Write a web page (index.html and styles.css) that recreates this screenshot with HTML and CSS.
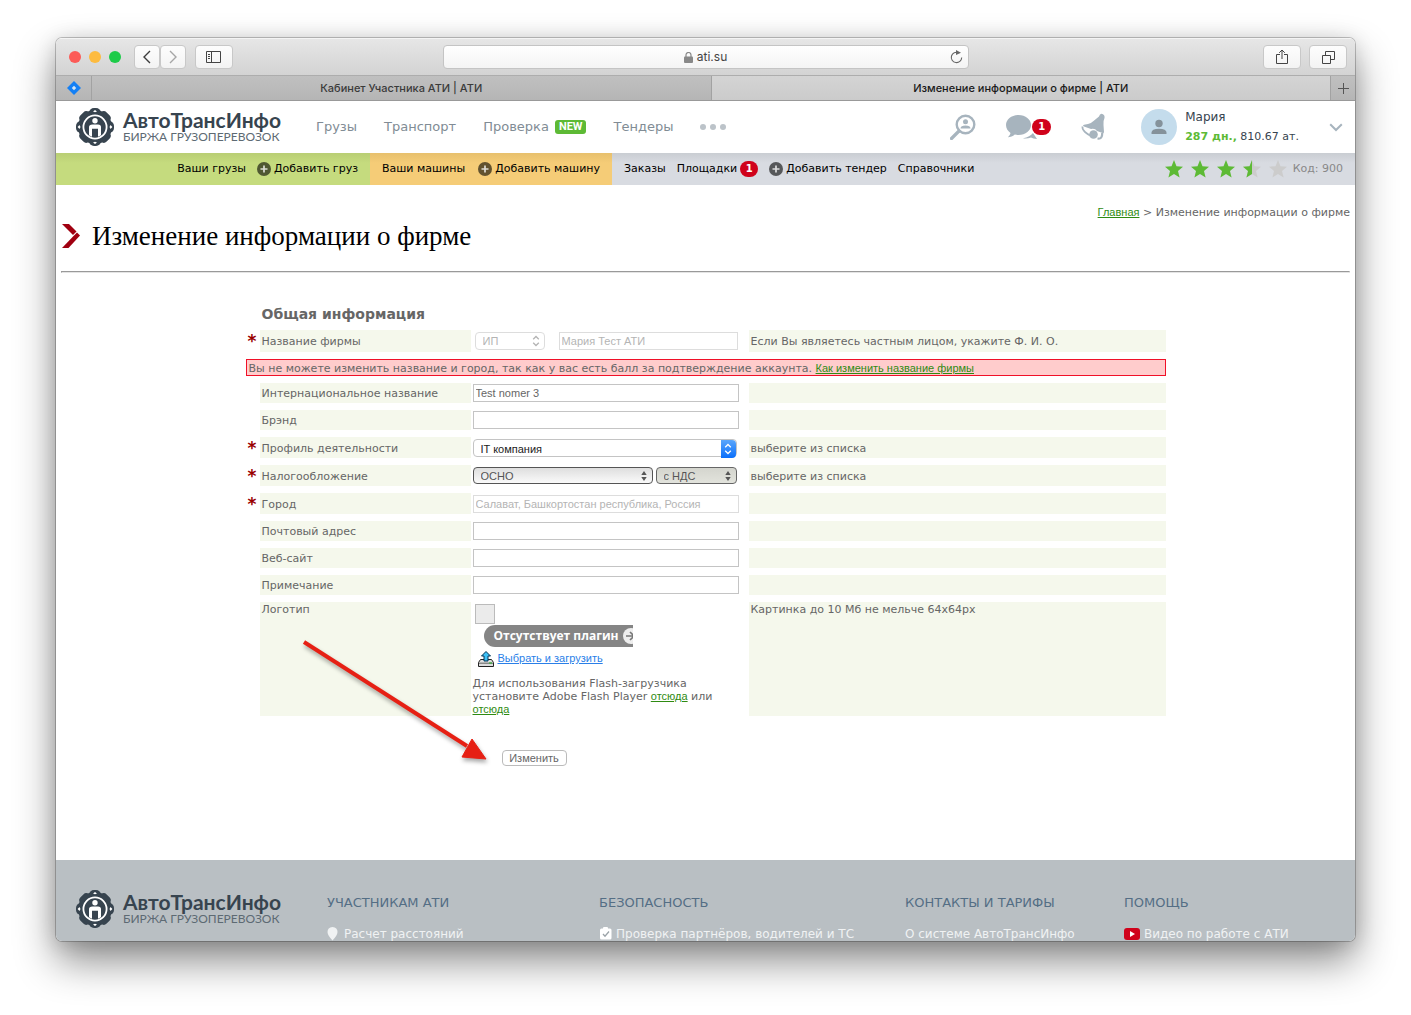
FILE: index.html
```html
<!DOCTYPE html>
<html lang="ru">
<head>
<meta charset="utf-8">
<meta name="viewport" content="width=device-width, initial-scale=1">
<title>Изменение информации о фирме | АТИ</title>
<link rel="stylesheet" href="styles.css">
</head>
<body>
<svg class="sprite" aria-hidden="true">
  <symbol id="gear" viewBox="0 0 38 38">
    <g fill="#37444f">
      <circle cx="19" cy="19" r="17"/>
      <rect x="13" y="0" width="12" height="38" rx="5"/><rect x="0" y="13" width="38" height="12" rx="5"/>
      <rect x="13" y="0.500" width="12" height="37" rx="4" transform="rotate(45 19 19)"/><rect x="13" y="0.500" width="12" height="37" rx="4" transform="rotate(-45 19 19)"/>
    </g>
    <g class="gear-cut">
      <path d="M17 3.500l2-1.500 2 1.500-2 .8zM17 34.500l2 1.500 2-1.500-2-.8zM3.500 17L1.600 19l1.900 2 1-2zM34.500 17l1.900 2-1.900 2-1-2z"/>
      <path fill-rule="evenodd" d="M19 6.500a12.500 12.500 0 1 1 0 25a12.500 12.500 0 1 1 0-25zM19 8.300a10.700 10.700 0 1 0 0 21.400a10.700 10.700 0 1 0 0-21.400z"/>
      <circle cx="19" cy="12.800" r="2.700"/>
      <path d="M13 27.300V19q0-2.500 3.500-2.500h5.500q3 0 3 2.500v8.300l-3 1.400v-8h-6v8z"/>
    </g>
  </symbol>
  <symbol id="plus" viewBox="0 0 14 14"><circle cx="7" cy="7" r="7" fill="#000" fill-opacity=".6"/><path d="M7 3.500v7M3.500 7h7" class="plus-cross" stroke-width="1.700"/></symbol>
  <symbol id="star" viewBox="0 0 18 18"><path d="M9 0l2.500 6.200 6.500.5-5 4.300 1.600 6.500L9 14l-5.600 3.500L5 11 0 6.700l6.500-.5z"/></symbol>
  <symbol id="updown" viewBox="0 0 8 12"><path d="M1.200 4.300L4 1.500l2.800 2.800M1.200 7.700L4 10.500l2.800-2.800" fill="none" stroke="currentColor" stroke-width="1.300"/></symbol>
  <symbol id="updown-solid" viewBox="0 0 8 12"><path d="M1.300 5L4 1l2.700 4zM1.300 7L4 11l2.700-4z" fill="currentColor"/></symbol>
</svg>

<div class="window">
  <div class="toolbar">
    <div class="tools">
      <span class="dot red"></span><span class="dot amber"></span><span class="dot lime"></span>
      <div class="pair">
        <button class="tool half" aria-label="Назад"><svg width="10" height="14" viewBox="0 0 10 14"><path d="M8 1L2 7l6 6" fill="none" stroke="#3c3c3c" stroke-width="1.400"/></svg></button>
        <button class="tool half" aria-label="Вперёд"><svg width="10" height="14" viewBox="0 0 10 14"><path d="M2 1l6 6-6 6" fill="none" stroke="#a6a6a6" stroke-width="1.400"/></svg></button>
      </div>
      <button class="tool" aria-label="Боковая панель"><svg width="16" height="12" viewBox="0 0 16 12"><path d="M.5.500h14v11H.5zM5.500.500v11M2 3.500h2M2 5.500h2M2 7.500h2" fill="none" stroke="#444"/></svg></button>
    </div>
    <div class="address">
      <span class="host"><svg width="9" height="11" viewBox="0 0 9 11"><rect y="4.500" width="9" height="6.500" rx="1" fill="#888"/><path d="M2 5V3a2.500 2.500 0 0 1 5 0v2" fill="none" stroke="#888" stroke-width="1.200"/></svg>ati.su</span>
      <button class="reload" aria-label="Обновить"><svg width="13" height="14" viewBox="0 0 13 14"><path d="M8.500 2.600A5.200 5.200 0 1 0 11.700 7.500" fill="none" stroke="#666" stroke-width="1.100"/><path d="M6 0l5 2.800-5 2.200z" fill="#666"/></svg></button>
    </div>
    <div class="tools end">
      <button class="tool" aria-label="Поделиться"><svg width="12" height="16" viewBox="0 0 12 16"><path d="M4 5.500H.5v9h11v-9H8M6 10V1M3.200 3.800L6 1l2.800 2.800" fill="none" stroke="#444"/></svg></button>
      <button class="tool" aria-label="Вкладки"><svg width="13" height="13" viewBox="0 0 13 13"><path d="M.5 4.500h8v8h-8zM3.500 4V.500h9v8H9" fill="none" stroke="#444"/></svg></button>
    </div>
  </div>

  <div class="tabs">
    <span class="pinned"><svg width="14" height="14" viewBox="0 0 14 14"><path d="M7 0l7 7-7 7-7-7z" fill="#1480f5"/><path d="M7 4.800L9.200 7 7 9.200 4.800 7z" fill="#d5e6f5"/></svg></span>
    <span class="tab">Кабинет Участника АТИ | АТИ</span>
    <span class="tab active">Изменение информации о фирме | АТИ</span>
    <button class="new-tab" aria-label="Новая вкладка"><svg width="11" height="11" viewBox="0 0 11 11"><path d="M5.500 0v11M0 5.500h11" stroke="#555"/></svg></button>
  </div>

  <header class="header">
    <a class="brand" href="#">
      <svg width="38" height="38"><use href="#gear"/></svg>
      <span class="brand-text"><span class="brand-name">АвтоТрансИнфо</span><span class="brand-sub">БИРЖА ГРУЗОПЕРЕВОЗОК</span></span>
    </a>
    <nav class="main-nav">
      <a href="#">Грузы</a>
      <a href="#">Транспорт</a>
      <a href="#">Проверка<span class="new">NEW</span></a>
      <a href="#">Тендеры</a>
      <a href="#" aria-label="Ещё"><svg width="27" height="6" viewBox="0 0 27 6" fill="#bcc3c9"><circle cx="3" cy="3" r="3"/><circle cx="13" cy="3" r="3"/><circle cx="23" cy="3" r="3"/></svg></a>
    </nav>
    <div class="account">
      <a href="#" aria-label="Поиск"><svg width="26" height="26" viewBox="0 0 26 26" fill="#a7b4be"><circle cx="15.500" cy="10.500" r="8.800" fill="none" stroke="#a7b4be" stroke-width="2.400"/><path d="M9 17l-7.500 7.500" stroke="#a7b4be" stroke-width="3.200" stroke-linecap="round"/><circle cx="15.500" cy="7.800" r="2.500"/><path d="M10.500 14.500q0-3 5-3t5 3z"/></svg></a>
      <a class="chat" href="#" aria-label="Сообщения"><svg width="31" height="26" viewBox="0 0 31 26" fill="#a7b4be"><path d="M12.500 1C5.500 1 0 5.500 0 11c0 3.300 1.700 6 4.500 8-.4 1.700-1.200 3-2.700 4.200 2.600 0 5-.8 7-2.600 1.200.300 2.400.400 3.700.400 7 0 12.500-4.500 12.500-10S19.500 1 12.500 1zM27 19q2 3 4 6-4-.2-6-1.500-4 1.500-8 .8 7-1.300 10-5.300z"/></svg><span class="count">1</span></a>
      <a href="#" aria-label="Уведомления"><svg width="25" height="28" viewBox="0 0 25 28" fill="#a7b4be"><path d="M18 3.500Q19 0 21.500 1t2 4q-1.500 3-1 7l.500 7q0 1.500-1.500 1L16 18q-2-3-6-2L3 13.500q-2-1 0-1.800l4-.7q3-.6 5.500-3z"/><path d="M1.500 13.500q-.5 3 2.500 5.500t5 3.500" fill="none" stroke="#a7b4be" stroke-width="1.700"/><circle cx="12.500" cy="21.500" r="4.300"/><path d="M16.500 25.500q5 1 4.700-5.500" fill="none" stroke="#a7b4be" stroke-width="2.200"/></svg></a>
      <div class="user">
        <svg width="36" height="36" viewBox="0 0 36 36"><circle cx="18" cy="18" r="18" fill="#c4dcec"/><g fill="#85929b"><circle cx="18" cy="14.500" r="3.700"/><path d="M10.500 25v-1.500q0-3.800 7.500-3.800t7.500 3.800V25z"/></g></svg>
        <div class="user-text"><div>Мария</div><div><b>287 дн.,</b> 810.67 ат.</div></div>
      </div>
      <button class="chevron" aria-label="Меню"><svg width="14" height="9" viewBox="0 0 14 9"><path d="M1.200 1.200L7 7l5.800-5.800" fill="none" stroke="#a7b4be" stroke-width="2"/></svg></button>
    </div>
  </header>

  <nav class="subnav">
    <div class="group cargo"><a href="#">Ваши грузы</a><a class="add" href="#"><svg width="14" height="14"><use href="#plus"/></svg>Добавить груз</a></div>
    <div class="group trucks"><a href="#">Ваши машины</a><a class="add" href="#"><svg width="14" height="14"><use href="#plus"/></svg>Добавить машину</a></div>
    <div class="group tenders"><a href="#">Заказы</a><a class="add" href="#">Площадки<span class="count small">1</span></a><a class="add" href="#"><svg width="14" height="14"><use href="#plus"/></svg>Добавить тендер</a><a href="#">Справочники</a></div>
    <div class="rating">
      <svg class="on" width="18" height="18"><use href="#star"/></svg>
      <svg class="on" width="18" height="18"><use href="#star"/></svg>
      <svg class="on" width="18" height="18"><use href="#star"/></svg>
      <svg width="18" height="18" viewBox="0 0 18 18"><path d="M9 0l2.500 6.200 6.500.5-5 4.300 1.600 6.500L9 14l-5.600 3.500L5 11 0 6.700l6.500-.5z" fill="#ccc"/><path d="M9 0v14l-5.600 3.500L5 11 0 6.700l6.500-.5z" fill="#5dba35"/></svg>
      <svg class="off" width="18" height="18"><use href="#star"/></svg>
      <span class="code">Код: 900</span>
    </div>
  </nav>

  <main class="page">
    <div class="crumbs"><a href="#">Главная</a> &gt; Изменение информации о фирме</div>
    <h1><svg width="19" height="24" viewBox="0 0 19 24" fill="#a00010"><path d="M1 0h7l7.500 7.500-3.500 3.500z"/><path d="M16 8.500l3 3L7.500 24H1l12-12.500z"/></svg>Изменение информации о фирме</h1>
    <hr>

    <form class="form">
      <h2>Общая информация</h2>
      <div class="row tall">
        <span class="req">*</span><label for="name">Название фирмы</label>
        <div class="field pairing">
          <span class="select pale type"><select aria-label="Форма" disabled><option>ИП</option></select><svg width="8" height="12"><use href="#updown"/></svg></span>
          <input class="name" id="name" type="text" value="Мария Тест АТИ" disabled>
        </div>
        <div class="hint">Если Вы являетесь частным лицом, укажите Ф. И. О.</div>
      </div>
      <p class="warning">Вы не можете изменить название и город, так как у вас есть балл за подтверждение аккаунта. <a href="#">Как изменить название фирмы</a></p>
      <div class="row"><span></span><label for="intl">Интернациональное название</label><div class="field"><input id="intl" type="text" value="Test nomer 3"></div><div class="hint"></div></div>
      <div class="row"><span></span><label for="brand">Брэнд</label><div class="field"><input id="brand" type="text"></div><div class="hint"></div></div>
      <div class="row mid"><span class="req">*</span><label for="profile">Профиль деятельности</label>
        <div class="field"><span class="select profile"><select id="profile"><option>IT компания</option></select><span class="knob"><svg width="8" height="12"><use href="#updown"/></svg></span></span></div>
        <div class="hint">выберите из списка</div></div>
      <div class="row mid"><span class="req">*</span><label for="tax">Налогообложение</label>
        <div class="field taxes"><span class="select metal"><select id="tax"><option>ОСНО</option></select><svg width="8" height="12"><use href="#updown-solid"/></svg></span><span class="select metal vat"><select aria-label="НДС"><option>с НДС</option></select><svg width="8" height="12"><use href="#updown-solid"/></svg></span></div>
        <div class="hint">выберите из списка</div></div>
      <div class="row mid"><span class="req">*</span><label for="city">Город</label><div class="field"><input id="city" type="text" value="Салават, Башкортостан республика, Россия" disabled></div><div class="hint"></div></div>
      <div class="row"><span></span><label for="post">Почтовый адрес</label><div class="field"><input id="post" type="text"></div><div class="hint"></div></div>
      <div class="row"><span></span><label for="web">Веб-сайт</label><div class="field"><input id="web" type="text"></div><div class="hint"></div></div>
      <div class="row"><span></span><label for="note">Примечание</label><div class="field"><input id="note" type="text"></div><div class="hint"></div></div>
      <div class="row logo-row"><span></span><div class="caption">Логотип</div>
        <div class="field upload">
          <div class="thumb"></div>
          <div class="plugin">Отсутствует плагин<svg width="16" height="16" viewBox="0 0 16 16"><circle cx="8" cy="8" r="8" fill="#eee"/><path d="M3 8h9M7 4l4.200 4L7 12" fill="none" stroke="#777" stroke-width="1.700"/></svg></div>
          <a class="pick" href="#"><svg width="16" height="16" viewBox="0 0 16 16"><path d="M2.500 8.500h11l2 3v4h-15v-4z" fill="#ddd" stroke="#222"/><path d="M1 11.500h14v1.500H1z" fill="#888"/><path d="M6 10V5H3.500L8 .500 12.500 5H10v5z" fill="#3cc0f5" stroke="#035"/><path d="M11 12h3" stroke="#2b2"/></svg><span>Выбрать и загрузить</span></a>
          <p>Для использования Flash-загрузчика установите Adobe Flash Player <a href="#">отсюда</a> или <a href="#">отсюда</a></p>
        </div>
        <div class="hint">Картинка до 10 Мб не мельче 64x64px</div></div>
      <button class="submit" type="button">Изменить</button>
      <svg class="arrow" width="200" height="136" viewBox="0 0 200 136"><path d="M4 4l163 104" stroke="#e62014" stroke-width="4"/><path d="M172 101l14 20-24-2z" fill="#e62014" stroke="#e62014"/></svg>
    </form>
  </main>

  <footer class="footer">
    <a class="brand" href="#">
      <svg width="38" height="38"><use href="#gear"/></svg>
      <span class="brand-text"><span class="brand-name">АвтоТрансИнфо</span><span class="brand-sub">БИРЖА ГРУЗОПЕРЕВОЗОК</span></span>
    </a>
    <div><h3>УЧАСТНИКАМ АТИ</h3><a class="first" href="#"><svg width="11" height="14" viewBox="0 0 11 14" fill="#f0f2f3"><path d="M5.500 0Q10.500.300 10.500 5 10.500 8 5.500 13.500.500 8 .500 5 .500.300 5.500 0z"/></svg>Расчет расстояний</a></div>
    <div><h3>БЕЗОПАСНОСТЬ</h3><a href="#"><svg width="13" height="14" viewBox="0 0 13 14"><rect x="1" y="1.500" width="11.500" height="11" rx="1.500" fill="#fff"/><rect x="4" width="5" height="3" rx="1" fill="#fff"/><path d="M4 7l2 2.200L10 4.500" fill="none" stroke="#9ba3a8" stroke-width="1.300"/></svg>Проверка партнёров, водителей и ТС</a></div>
    <div><h3>КОНТАКТЫ И ТАРИФЫ</h3><a href="#">О системе АвтоТрансИнфо</a></div>
    <div><h3>ПОМОЩЬ</h3><a href="#"><svg width="16" height="12" viewBox="0 0 16 12"><rect width="16" height="12" rx="3" fill="#d0021b"/><path d="M6 3l5 3-5 3z" fill="#fff"/></svg>Видео по работе с АТИ</a></div>
  </footer>
</div>
</body>
</html>
```
FILE: styles.css
```css
* { box-sizing: border-box; }

body {
  margin: 0;
  height: 100vh;
  padding: 38px 56px 74px;
  background: #fff;
  font: 11px/14px "DejaVu Sans", sans-serif;
  color: #666;
}

h1, h2, h3, p { margin: 0; font-weight: normal; }
a { color: inherit; text-decoration: none; }
button { padding: 0; border: 0; background: none; font: inherit; color: inherit; }
svg { display: block; flex: none; }
.sprite { position: absolute; width: 0; height: 0; }

.window {
  display: flex;
  flex-direction: column;
  height: 100%;
  overflow: hidden;
  border-radius: 6px;
  background: #fff;
  box-shadow: 0 0 0 1px rgba(0, 0, 0, .22), 0 20px 40px rgba(0, 0, 0, .46), 0 2px 20px rgba(0, 0, 0, .14);
}
.window > * { flex: none; }

/* Browser chrome */
.toolbar {
  display: grid;
  grid-template-columns: 1fr minmax(200px, 526px) 1fr;
  align-items: center;
  height: 38px;
  border-top: 1px solid #f4f4f4;
  border-bottom: 1px solid #adadad;
  background: linear-gradient(#e6e6e6, #d3d3d3);
}
.tools { display: flex; align-items: center; gap: 8px; padding: 0 8px 0 13px; }
.tools.end { justify-content: flex-end; }
.dot { width: 12px; height: 12px; border-radius: 50%; }
.red { background: #fc5b57; }
.amber { background: #fdbb3f; }
.lime { background: #1dcb49; }
.pair { display: flex; margin: 0 1px 0 5px; }
.tool {
  display: grid;
  place-items: center;
  width: 38px;
  height: 24px;
  border: 1px solid #c8c8c8;
  border-radius: 4px;
  background: linear-gradient(#fdfdfd, #f3f3f3);
}
.half { width: 26px; }
.address {
  display: grid;
  grid-template-columns: 18px 1fr 18px;
  align-items: center;
  height: 24px;
  border: 1px solid #c4c4c4;
  border-radius: 4px;
  background: linear-gradient(#fff, #f4f4f4);
}
.host {
  grid-column: 2;
  display: flex;
  align-items: center;
  justify-content: center;
  gap: 4px;
  font: 12px/16px Inter, sans-serif;
  color: #444;
}
.tabs {
  display: flex;
  height: 25px;
  border-bottom: 1px solid #999;
  background: linear-gradient(#c0c0c0, #b5b5b5);
  font: 500 11px/24px Inter, sans-serif;
  color: #3a3a3a;
}
.pinned, .new-tab { display: grid; place-items: center; width: 36px; border-right: 1px solid #a2a2a2; }
.new-tab { width: 25px; border-right: 0; border-left: 1px solid #a2a2a2; }
.tab { flex: 1; text-align: center; }
.active { border-left: 1px solid #a2a2a2; background: linear-gradient(#d4d4d4, #cbcbcb); color: #1a1a1a; }

/* Site header */
.header { display: flex; align-items: center; height: 52px; padding: 0 12px 0 20px; }
.brand { display: flex; align-items: center; gap: 9px; width: 204px; color: #37444f; }
.brand-text { display: flex; flex-direction: column; white-space: nowrap; }
.brand-name { font: bold 21px/20px Lato, sans-serif; }
.brand-sub { font: 12px/14px Lato, sans-serif; color: #5d6a73; }
.gear-cut { fill: #fff; }
.plus-cross { stroke: #fff; stroke-opacity: .8; }
.main-nav { display: flex; align-items: center; gap: 27px; margin-left: 36px; font-size: 13px; line-height: 16px; color: #818c95; }
.main-nav a { display: flex; align-items: center; gap: 6px; }
.new { padding: 0 4px; border-radius: 3px; background: #5dba35; color: #fff; font: bold 11px/14px Roboto, sans-serif; }
.account { display: flex; align-items: center; gap: 30px; margin-left: auto; }
.chat { display: flex; align-items: center; }
.count {
  width: 19px;
  height: 16px;
  border-radius: 8px;
  background: #d0021b;
  color: #fff;
  font-size: 10px;
  font-weight: bold;
  line-height: 16px;
  text-align: center;
}
.chat .count { margin-left: -5px; }
.small { width: 18px; }
.user { display: flex; align-items: center; gap: 8px; margin-left: 5px; }
.user-text { font-size: 12px; line-height: 19px; color: #37444f; white-space: nowrap; }
.user-text div + div { font-size: 11px; }
.user-text b { color: #5dba35; }

.subnav { display: flex; height: 32px; background: linear-gradient(#c9cdd2, #d8dbe1 10px); color: #000; white-space: nowrap; }
.group { display: flex; align-items: center; gap: 12px; padding: 0 12px; }
.group a { display: flex; align-items: center; gap: 3px; }
.cargo { justify-content: flex-end; gap: 11px; width: 314px; background: linear-gradient(#b9ce74, #c5db7e 10px); }
.trucks { justify-content: space-between; width: 242px; background: linear-gradient(#e7c06d, #f5cc77 10px); }
.tenders { gap: 11px; }
.rating { display: flex; align-items: center; gap: 8px; margin-left: auto; padding-right: 12px; color: #888; }
.on { fill: #5dba35; }
.off { fill: #ccc; }
.code { margin-left: -2px; }

/* Page */
.page { min-height: 675px; padding: 0 5px; }
.crumbs { padding-top: 20px; text-align: right; }
.crumbs a, .form p a { color: #2f8b12; font-family: "Liberation Sans", sans-serif; text-decoration: underline; }
h1 {
  display: flex;
  align-items: center;
  gap: 12px;
  font: 27px/32px "Liberation Serif", serif;
  color: #000;
}
hr { margin: 19px 0 0; border: 1px solid; border-color: #999 #e4e4e4 #e4e4e4 #999; }

.form {
  position: relative;
  display: flex;
  flex-direction: column;
  gap: 7px;
  max-width: 920px;
  margin: 32px auto 0;
}
h2 { padding-left: 16px; font-size: 14px; font-weight: bold; line-height: 18px; }
.row { display: grid; grid-template-columns: 14px 211px 278px 1fr; min-height: 20px; }
.tall { min-height: 22px; }
.mid { min-height: 21px; }
.row label, .hint, .caption { display: flex; align-items: center; padding: 2px 2px 0; background: #f5f8ec; }
.req { height: 20px; padding-left: 2px; color: #990000; font: bold 17px/22px "DejaVu Sans", sans-serif; }
.field { display: flex; align-items: center; padding: 0 10px 0 2px; }
.field input {
  width: 266px;
  height: 18px;
  padding: 0 2px;
  border: 1px solid #c4c4c4;
  background: #fff;
  color: #666;
  font: 11px/14px "Liberation Sans", sans-serif;
}
.field input:disabled { border-color: #ddd; color: #b4b4b4; }
.pairing { justify-content: space-between; padding: 0 11px 0 4px; }
.field .name { width: 179px; }
.warning { padding: 1px 2px 0; border: 1px solid #f01028; background: #fcc; line-height: 14px; height: 17px; white-space: nowrap; }

.select { display: grid; align-items: center; height: 18px; border: 1px solid #c4c4c4; border-radius: 4px; background: #fff; }
.select select {
  grid-area: 1 / 1;
  width: 100%;
  height: 16px;
  padding: 0 7px;
  border: 0;
  appearance: none;
  background: none;
  color: inherit;
  font: 11px/14px "Liberation Sans", sans-serif;
  opacity: 1;
}
.select > svg { grid-area: 1 / 1; justify-self: end; margin-right: 4px; }
.pale { border-color: #ddd; color: #b4b4b4; }
.type { width: 70px; }
.profile { width: 264px; color: #222; }
.knob {
  grid-area: 1 / 1;
  justify-self: end;
  display: grid;
  place-items: center;
  width: 15px;
  height: 18px;
  border-radius: 0 4px 4px 0;
  background: linear-gradient(#5ba6fb, #0a6ffb);
  color: #fff;
}
.taxes { justify-content: space-between; padding-right: 12px; }
.metal { width: 180px; height: 17px; border-color: #555; background: linear-gradient(#dedede, #fafafa); color: #555; }
.vat { width: 81px; border-color: #666; background: linear-gradient(#d4d5ce, #e2e3dc); }

.logo-row { min-height: 114px; }
.logo-row .caption, .logo-row .hint { align-items: flex-start; padding-top: 1px; }
.upload { flex-direction: column; align-items: flex-start; padding-top: 2px; }
.thumb { width: 20px; height: 20px; margin-left: 2px; border: 1px solid #bbb; background: #ebebeb; }
.plugin {
  display: flex;
  align-items: center;
  gap: 4px;
  width: 149px;
  height: 22px;
  margin: 1px 0 0 11px;
  padding-left: 10px;
  overflow: hidden;
  border-radius: 11px 0 0 11px;
  background: #858585;
  color: #fff;
  font: bold 12px/22px "Open Sans", sans-serif;
  white-space: nowrap;
}
.pick { display: flex; gap: 4px; margin: 4px 0 0 5px; color: #2a7fe8; font-family: "Liberation Sans", sans-serif; text-decoration: underline; }
.upload p { margin-top: 10px; line-height: 13px; }
.submit {
  width: 65px;
  height: 16px;
  margin: 27px 0 0 256px;
  border: 1px solid #bbb;
  border-radius: 4px;
  background: #fff;
  font: 11px/14px "Liberation Sans", sans-serif;
}
.arrow { position: absolute; left: 54px; top: 333px; filter: drop-shadow(1px 3px 2px rgba(0, 0, 0, .35)); }

/* Footer */
.footer {
  display: grid;
  grid-template-columns: 251fr 272fr 306fr 219fr 231fr;
  align-items: start;
  padding: 30px 0 30px 20px;
  background: #b9bfc3;
  color: #f0f2f3;
  font-size: 12px;
  white-space: nowrap;
}
.footer .gear-cut { fill: #b9bfc3; }
.footer h3 { margin: 5px 0 15px; font-size: 13px; line-height: 16px; color: #546e85; }
.footer div a { display: flex; align-items: center; gap: 4px; line-height: 16px; }
.footer .first { gap: 6px; }
```
